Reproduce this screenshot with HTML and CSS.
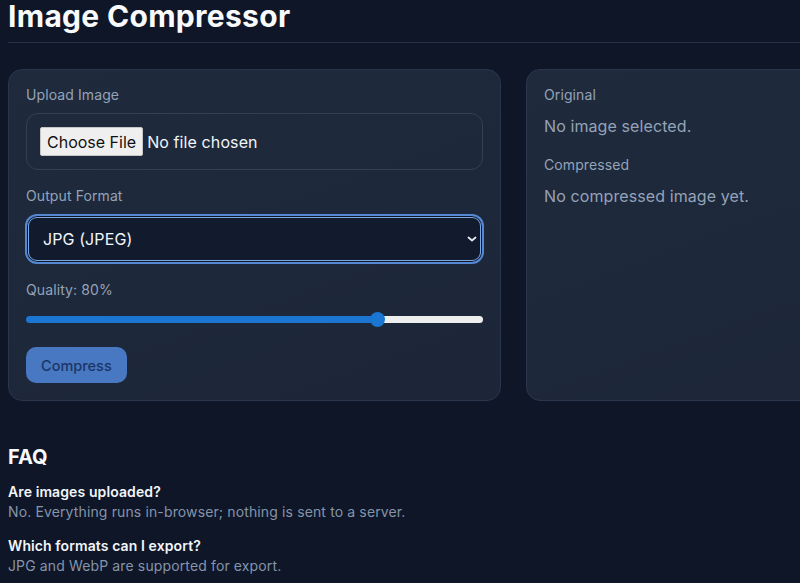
FILE: index.html
```html
<!DOCTYPE html>
<html lang="en">
<head>
<meta charset="utf-8">
<title>Image Compressor</title>
<link rel="stylesheet" href="styles.css">
</head>
<body>
<main class="page">
  <h1 class="title">Image Compressor</h1>
  <div class="grid">
    <section class="card">
      <div class="label">Upload Image</div>
      <label class="file">
        <span class="file-btn">Choose File</span>
        <span class="file-name">No file chosen</span>
        <input class="file-input" type="file" accept="image/*">
      </label>
      <div class="label label-gap">Output Format</div>
      <div class="select-wrap">
        <select class="select">
          <option>JPG (JPEG)</option>
          <option>WebP</option>
        </select>
        <svg class="chevron" width="12" height="8" viewBox="0 0 12 8" aria-hidden="true"><path d="M2.5 2.5 L6 5.5 L9.5 2.5" fill="none" stroke="#e5e9f0" stroke-width="1.8" stroke-linecap="round" stroke-linejoin="round"/></svg>
      </div>
      <div class="label label-gap">Quality: 80%</div>
      <input class="range" type="range" min="10" max="100" value="80">
      <div class="actions">
        <button class="btn" type="button" disabled>Compress</button>
      </div>
    </section>
    <section class="card">
      <div class="label label-preview">Original</div>
      <p class="empty">No image selected.</p>
      <div class="label label-preview">Compressed</div>
      <p class="empty">No compressed image yet.</p>
    </section>
  </div>
  <section class="faq">
    <h2 class="faq-title">FAQ</h2>
    <div class="faq-item">
      <div class="q">Are images uploaded?</div>
      <div class="a">No. Everything runs in-browser; nothing is sent to a server.</div>
    </div>
    <div class="faq-item">
      <div class="q">Which formats can I export?</div>
      <div class="a">JPG and WebP are supported for export.</div>
    </div>
  </section>
</main>
</body>
</html>
```
FILE: styles.css
```css
html, body {
  margin: 0;
  padding: 0;
  overflow: hidden;
  background: #0e1628;
}
body {
  font-family: Inter, "Noto Sans", "Liberation Sans", sans-serif;
  color: #e2e8f0;
}
.page {
  width: 1011px;
  padding: 0 8px;
}
.title {
  margin: 0;
  font-size: 30px;
  line-height: 32px;
  font-weight: 700;
  letter-spacing: 0.3px;
  color: #f8fafc;
  padding-bottom: 10px;
  border-bottom: 1px solid #243047;
}
.grid {
  display: grid;
  grid-template-columns: 493px 493px;
  gap: 25px;
  margin-top: 26px;
}
.card {
  background: linear-gradient(160deg, #1f2a3d 0%, #1c2638 100%);
  border: 1px solid #2a364c;
  border-radius: 14px;
  padding: 15px 17px 17px;
  display: flex;
  flex-direction: column;
}
.label {
  font-size: 14px;
  line-height: 20px;
  letter-spacing: 0.1px;
  color: #94a3b8;
  margin-bottom: 8px;
}
.label-gap {
  margin-top: 16px;
}
.label-preview {
  margin-bottom: 9px;
}
.file {
  display: flex;
  align-items: center;
  gap: 4px;
  border: 1px solid #334156;
  border-radius: 12px;
  padding: 13px 13px;
}
.file-input {
  display: none;
}
.file-btn {
  display: inline-flex;
  align-items: center;
  height: 27px;
  padding: 0 6px;
  background: #efefef;
  color: #111111;
  border: 1px solid #c6c6c6;
  border-radius: 2px;
  font-size: 16px;
}
.file-name {
  font-size: 16px;
  letter-spacing: 0.1px;
  color: #f1f5f9;
}
.select-wrap {
  position: relative;
  margin: 0 -1px;
}
.select {
  appearance: none;
  -webkit-appearance: none;
  width: 100%;
  height: 50px;
  box-sizing: border-box;
  background: #121b2e;
  color: #f1f5f9;
  font-family: inherit;
  font-size: 16px;
  letter-spacing: 0.1px;
  padding: 0 16px;
  border: 2px solid #5588d2;
  border-radius: 12px;
  box-shadow: inset 0 0 0 1px #0e1628, inset 0 0 0 2px #7aa6e4;
  outline: none;
}
.chevron {
  position: absolute;
  right: 6px;
  top: 21px;
}
.range {
  -webkit-appearance: none;
  appearance: none;
  width: 100%;
  height: 16px;
  margin: 3px 0 0;
  background: transparent;
}
.range::-webkit-slider-runnable-track {
  height: 7px;
  border-radius: 4px;
  background: linear-gradient(to right, #1a76d0 0%, #1a76d0 77%, #eeeeee 77%, #eeeeee 100%);
}
.range::-webkit-slider-thumb {
  -webkit-appearance: none;
  appearance: none;
  width: 15px;
  height: 15px;
  border-radius: 50%;
  background: #1a76d0;
  margin-top: -4px;
  border: none;
}
.actions {
  margin-top: 20px;
}
.btn {
  font-family: inherit;
  font-size: 14.5px;
  font-weight: 500;
  height: 36px;
  padding: 0 15px;
  border: none;
  border-radius: 10px;
  background: #4878c2;
  color: #1b3566;
}
.empty {
  margin: 0 0 17px;
  font-size: 16px;
  line-height: 24px;
  letter-spacing: 0.1px;
  color: #94a3b8;
}
.faq {
  margin-top: 42px;
}
.faq-title {
  margin: 0 0 11px;
  font-size: 20px;
  line-height: 28px;
  font-weight: 700;
  color: #f8fafc;
}
.faq-item {
  margin-bottom: 14px;
}
.q {
  font-size: 14px;
  line-height: 20px;
  font-weight: 600;
  letter-spacing: 0.1px;
  color: #f1f5f9;
}
.a {
  font-size: 14px;
  line-height: 20px;
  letter-spacing: 0.13px;
  color: #8594aa;
}
```
